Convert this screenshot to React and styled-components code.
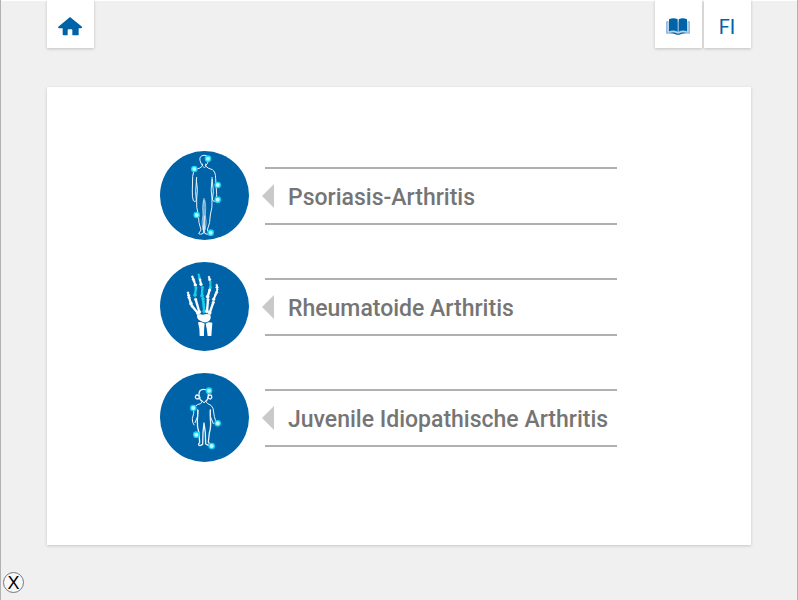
import React from "react";
import styled, { createGlobalStyle } from "styled-components";

const BLUE = "#0062a7";
const GLOW = "#19d3f0";

const GlobalStyle = createGlobalStyle`
  *, *::before, *::after { box-sizing: border-box; }
  body {
    margin: 0;
    background: #f0f0f0;
    font-family: Roboto, "Liberation Sans", sans-serif;
  }
`;

const Page = styled.div`
  min-height: 100vh;
  display: flex;
  flex-direction: column;
  background: #f0f0f0;
  border: solid #b2b2b2;
  border-width: 0 1px;
  box-shadow: inset 0 1px #fff;
`;

const Toolbar = styled.header`
  display: flex;
  justify-content: space-between;
  padding: 0 46px;
`;

const ToolGroup = styled.nav`
  display: flex;
  gap: 2px;
`;

const ToolButton = styled.button`
  display: flex;
  align-items: center;
  justify-content: center;
  width: 47px;
  height: 48px;
  padding: 5px 1px 0 0;
  border: 0;
  background: #fff;
  color: ${BLUE};
  font: 400 20px/24px Roboto, "Liberation Sans", sans-serif;
  box-shadow: 0 1px 3px rgba(0, 0, 0, 0.2);
  cursor: pointer;
`;

const Panel = styled.main`
  flex: 1;
  display: flex;
  justify-content: center;
  align-items: flex-start;
  margin: 39px 46px 0;
  padding: 64px 21px 82px 0;
  background: #fff;
  box-shadow: 0 1px 3px rgba(0, 0, 0, 0.18);
`;

const TopicList = styled.ul`
  display: flex;
  flex-direction: column;
  gap: 22px;
  width: 66%;
  min-width: 457px;
  margin: 0;
  padding: 0;
  list-style: none;
`;

const TopicLink = styled.a`
  display: flex;
  align-items: center;
  color: #757575;
  text-decoration: none;
`;

const Badge = styled.span`
  display: flex;
  flex: none;
  width: 89px;
  height: 89px;
  border-radius: 50%;
  background: ${BLUE};
`;

const Arrow = styled.span`
  flex: none;
  margin: 0 -9px 0 13px;
  border: solid transparent;
  border-width: 12px 12px 12px 0;
  border-right-color: #c9c9c9;
`;

const TopicLabel = styled.span`
  flex: 1;
  padding: 15px 0 12px 23px;
  border: solid #b0b0b0;
  border-width: 2px 0;
  font-size: 23px;
  font-weight: 500;
  line-height: 27px;
  white-space: nowrap;
`;

const Footer = styled.footer`
  display: flex;
  height: 55px;
  padding: 27px 2px 0;
`;

const CloseButton = styled.button`
  display: flex;
  align-items: center;
  justify-content: center;
  width: 21px;
  height: 21px;
  padding: 0;
  border: 1px solid #777;
  border-radius: 50%;
  background: #f8f8f8;
  color: #000;
  font: 400 18px/20px "Liberation Sans", sans-serif;
  cursor: pointer;
`;

const HomeIcon = () => (
  <svg width="24" height="19" viewBox="0 0 72 57" fill={BLUE} aria-hidden="true">
    <path d="M36 0 L72 29 Q73 33 69 34 H62 V53 Q62 55 60 55 H43 V39 Q43 37 41 37 H32 Q29 37 29 39 V55 H17 Q14 55 14 52 V34 H3 Q-1 33 1 29 Z" />
  </svg>
);

const BookIcon = () => (
  <svg width="24" height="17" viewBox="0 0 72 51" aria-hidden="true">
    <path d="M7 11 H2 V46 Q20 42 34 47 H39 Q52 42 70 46 V11 H65" fill="#b9d3e8" stroke="#4f92c4" strokeWidth="2" />
    <path d="M9 4 Q22 -3 35 4 V41 Q22 34 9 40 Z M38 4 Q50 -3 63 4 V40 Q50 34 38 41 Z" fill={BLUE} />
    <path d="M10 46 Q23 40 34 47 H39 Q50 40 62 46 Q50 44 40 50 H32 Q22 44 10 46Z" fill={BLUE} />
  </svg>
);

const Spots = ({ points }) =>
  points.map(([x, y]) => (
    <g key={`${x}-${y}`}>
      <circle cx={x} cy={y} r="10" fill={GLOW} />
      <circle cx={x} cy={y} r="6" fill="#b5fbff" />
    </g>
  ));

const AdultFigure = () => (
  <svg width="89" height="89" viewBox="17 15 267 267" aria-hidden="true">
    <g fill="none" stroke="#e8f3fb" strokeWidth="3" strokeLinecap="round" strokeLinejoin="round">
      <path d="M144 58 Q138 51 137 43 Q134 29 149 28 Q164 27 163 43 Q160 54 154 59" />
      <path d="M144 54 V60 Q139 67 125 70 Q115 76 115 92 L114 132 Q113 153 117 164 Q122 170 126 163 L124 137 L127 94" />
      <path d="M126 100 Q132 132 127 159 Q125 185 132 207 Q132 230 140 252 L133 263 Q138 267 147 262 L149 210 L149 158" />
      <path d="M154 54 V60 Q159 67 174 71 Q184 77 184 98 L187 145 Q188 159 181 167 L174 162 L177 137 L173 94" />
      <path d="M173 100 Q168 132 173 159 Q175 184 168 207 Q168 230 159 252 L165 263 Q158 267 151 262 L151 210" />
      <path d="M147 164 Q143 185 146 206 Q141 229 145 250 M152 164 Q156 185 153 206 Q158 229 153 250" strokeWidth="2" />
      <path d="M146 61 L150 66 L154 61" strokeWidth="2" />
    </g>
    <Spots points={[[161, 38], [120, 69], [190, 117], [190, 161], [127, 207], [169, 260]]} />
  </svg>
);

/* Each bone runs from one joint to the next: [x1, y1, x2, y2, shaft width, highlighted] */
const BONES = [
  [114, 59, 117, 67, 5], [119, 72, 123, 84, 6], [125, 92, 122, 114, 7, true], [124, 127, 135, 165, 7],
  [133, 53, 135, 62, 5, true], [137, 68, 140, 82, 6], [144, 91, 143, 116, 7, true], [146, 125, 150, 163, 8, true],
  [164, 60, 166, 68, 5], [168, 75, 168, 92, 6, true], [166, 99, 160, 119, 7], [161, 128, 158, 163, 7],
  [187, 84, 188, 91, 5], [189, 97, 187, 106, 5], [184, 112, 178, 127, 6], [177, 136, 166, 168, 7],
  [101, 107, 103, 115, 5], [104, 121, 110, 140, 7], [113, 147, 131, 169, 7],
];

const Bone = ({ bone: [x1, y1, x2, y2, width, lit] }) => {
  const color = lit ? "#19cfe6" : "#fff";
  return (
    <g stroke={color} fill={color}>
      <line x1={x1} y1={y1} x2={x2} y2={y2} strokeWidth={width} />
      <circle cx={x1} cy={y1} r={width / 2} strokeWidth="2" />
      <circle cx={x2} cy={y2} r={width / 2 + 1} strokeWidth="2" />
    </g>
  );
};

const HandBones = () => (
  <svg width="89" height="89" viewBox="17 15 267 267" aria-hidden="true">
    {BONES.map((bone) => (
      <Bone key={bone.join()} bone={bone} />
    ))}
    <g fill="#fff">
      <path d="M128 175 Q137 170 146 173 Q158 169 168 174 Q172 185 163 193 Q152 200 139 192 Q127 188 128 175Z" />
      <path d="M131 196 Q142 193 151 200 Q149 211 149 237 H136 Q137 217 131 196Z" />
      <path d="M154 200 Q162 193 174 197 Q173 211 171 237 H160 Q158 215 154 200Z" />
    </g>
  </svg>
);

const ChildFigure = () => (
  <svg width="89" height="89" viewBox="17 17 267 267" aria-hidden="true">
    <g fill="none" stroke="#e8f3fb" strokeWidth="4" strokeLinecap="round" strokeLinejoin="round">
      <path d="M144 102 Q134 97 134 83 Q133 66 148 66 Q164 66 162 83 Q162 97 154 102" />
      <path d="M134 86 Q127 80 124 86 Q121 92 128 95 Q134 95 137 90 M162 86 Q169 80 172 86 Q174 92 169 95 Q162 95 160 90" />
      <path d="M144 101 L149 107 L154 101" strokeWidth="3" />
      <path d="M143 103 L139 109 Q128 110 121 119 Q117 126 118 138 L114 154 Q113 165 119 173 M130 127 L130 147 L122 166" strokeWidth="3" />
      <path d="M155 103 L160 109 Q172 112 176 123 L180 147 Q184 158 185 171 M168 127 V147 L177 169" strokeWidth="3" />
      <path d="M131 129 L129 161 Q128 179 134 197 L136 225 Q129 234 137 235 L145 231 L146 196 L149 167 L153 196 L154 230 L162 234 Q169 232 162 224 L165 197 Q171 178 168 153 L168 129" />
    </g>
    <Spots points={[[164, 70], [117, 122], [190, 168], [126, 202], [172, 236]]} />
  </svg>
);

const TOPICS = [
  { id: "psoriasis", label: "Psoriasis-Arthritis", Icon: AdultFigure },
  { id: "rheumatoid", label: "Rheumatoide Arthritis", Icon: HandBones },
  { id: "juvenile", label: "Juvenile Idiopathische Arthritis", Icon: ChildFigure },
];

export default function App() {
  return (
    <>
      <GlobalStyle />
      <Page>
        <Toolbar>
          <ToolButton type="button" aria-label="Home">
            <HomeIcon />
          </ToolButton>
          <ToolGroup>
            <ToolButton type="button" aria-label="Book">
              <BookIcon />
            </ToolButton>
            <ToolButton type="button">FI</ToolButton>
          </ToolGroup>
        </Toolbar>
        <Panel>
          <TopicList>
            {TOPICS.map(({ id, label, Icon }) => (
              <li key={id}>
                <TopicLink href={`#${id}`}>
                  <Badge>
                    <Icon />
                  </Badge>
                  <Arrow />
                  <TopicLabel>{label}</TopicLabel>
                </TopicLink>
              </li>
            ))}
          </TopicList>
        </Panel>
        <Footer>
          <CloseButton type="button">X</CloseButton>
        </Footer>
      </Page>
    </>
  );
}
